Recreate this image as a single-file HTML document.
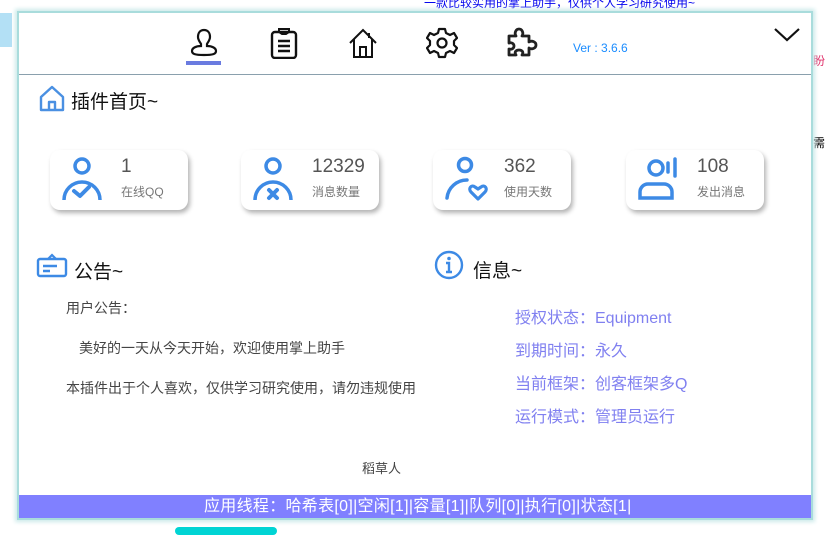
<!DOCTYPE html>
<html><head><meta charset="utf-8"><style>
*{margin:0;padding:0;box-sizing:border-box}
body{width:826px;height:531px;background:#fff;position:relative;overflow:hidden;font-family:"Liberation Sans","Noto Sans CJK SC",sans-serif}
.abs{position:absolute}
#win{position:absolute;left:17px;top:11px;width:796px;height:509px;background:#fff;border:2px solid #a9dcdc;box-shadow:0 0 4px 2px #cdeaea}
#in{position:absolute;left:-5px;top:0;width:0;height:0}
.card{position:absolute;top:137px;width:138px;height:60px;background:#fff;border-radius:10px;box-shadow:2px 3px 5px rgba(0,0,0,.3)}
.card .n{position:absolute;left:71px;top:6px;font-size:19px;color:#555}
.card .l{position:absolute;left:71px;top:33px;font-size:12px;color:#777}
.card svg{position:absolute;left:10px;top:6px}
.info{position:absolute;left:501px;font-size:16px;color:#8080f0;white-space:nowrap}
.ann{position:absolute;font-size:14px;color:#444;white-space:nowrap}
</style></head><body>
<div class="abs" style="left:0;top:13px;width:12px;height:34px;background:#b3e0f5"></div>
<div class="abs" style="left:424px;top:-6px;font-size:12px;color:#0000ee">一款比较实用的掌上助手，仅供个人学习研究使用~</div>
<div class="abs" style="left:813px;top:52px;font-size:12px;color:#e0306a">盼</div>
<div class="abs" style="left:813px;top:134px;font-size:12px;color:#000">需</div>
<div id="win">
 <div class="abs" style="left:0;top:61px;width:792px;height:1px;background:#8aa0ad"></div>
 <div id="in">
 <svg class="abs" style="left:176px;top:15px" width="28" height="30" viewBox="0 0 28 30"><path d="M14 2c-4 0-6 3-6 7 0 3 2 5 3 7v2c-5 0-9 2-9 5 0 3 3 4 12 4s12-1 12-4c0-3-4-5-9-5v-2c1-2 3-4 3-7 0-4-2-7-6-7z" fill="none" stroke="#111" stroke-width="2.2"/></svg>
 <div class="abs" style="left:172px;top:48px;width:35px;height:4px;background:#6a7be0"></div>
 <svg class="abs" style="left:255px;top:14px" width="30" height="32" viewBox="0 0 30 32"><rect x="3" y="5" width="24" height="26" rx="3" fill="none" stroke="#111" stroke-width="2.4"/><path d="M10 5V2h10v3l-3 2h-4z" fill="none" stroke="#111" stroke-width="2"/><path d="M9 14h12M9 19h12M9 24h12" stroke="#111" stroke-width="2.4"/></svg>
 <svg class="abs" style="left:333px;top:14px" width="32" height="32" viewBox="0 0 32 32"><path d="M3 16L16 3l13 13M7 12v18h18V12M13 30v-10h6v10M22 6v5" fill="none" stroke="#111" stroke-width="2"/></svg>
 <svg class="abs" style="left:412px;top:14px" width="32" height="32" viewBox="0 0 32 32"><path d="M13 2h6l1 4 4 2 4-2 3 5-3 3v4l3 3-3 5-4-2-4 2-1 4h-6l-1-4-4-2-4 2-3-5 3-3v-4L1 11l3-5 4 2 4-2z" fill="none" stroke="#111" stroke-width="2.2" stroke-linejoin="round"/><circle cx="16" cy="16" r="4.5" fill="none" stroke="#111" stroke-width="2.2"/></svg>
 <svg class="abs" style="left:492px;top:14px" width="32" height="32" viewBox="0 0 32 32"><path d="M3 9h7c-2-3 0-7 3-7s5 4 3 7h7v6c3-2 7 0 7 3s-4 5-7 3v7h-7c2-3 0-5-3-5s-5 2-3 5H3v-6c3 1 5-1 5-3s-2-4-5-3z" fill="none" stroke="#222" stroke-width="2.8" stroke-linejoin="round"/></svg>
 <div class="abs" style="left:559px;top:28px;font-size:12px;color:#1a8cff;white-space:nowrap">Ver : 3.6.6</div>
 <svg class="abs" style="left:759px;top:14px" width="28" height="16" viewBox="0 0 28 16"><path d="M2 2l12 11L26 2" fill="none" stroke="#111" stroke-width="2.2"/></svg>
 <svg class="abs" style="left:24px;top:71px" width="28" height="28" viewBox="0 0 28 28"><path d="M3 13L14 3l11 10v13H3z M11 26v-8h6v8" fill="none" stroke="#4a90e2" stroke-width="2.4" stroke-linejoin="round"/></svg>
 <div class="abs" style="left:57px;top:74px;font-size:19px;color:#111;white-space:nowrap">插件首页~</div>
 <div class="card" style="left:36px"><svg width="46" height="46" viewBox="0 0 46 46"><circle cx="22" cy="10" r="7" fill="none" stroke="#3d8ae5" stroke-width="3.5"/><path d="M4 44a18 18 0 0 1 36 0" fill="none" stroke="#3d8ae5" stroke-width="3.5"/><path d="M14 35l6 5 9-9" fill="none" stroke="#3d8ae5" stroke-width="4" stroke-linecap="round" stroke-linejoin="round"/></svg><div class="n">1</div><div class="l">在线QQ</div></div>
 <div class="card" style="left:227px"><svg width="46" height="46" viewBox="0 0 46 46"><circle cx="22" cy="10" r="7" fill="none" stroke="#3d8ae5" stroke-width="3.5"/><path d="M4 44a18 18 0 0 1 36 0" fill="none" stroke="#3d8ae5" stroke-width="3.5"/><path d="M18 34l8 8M26 34l-8 8" stroke="#3d8ae5" stroke-width="4" stroke-linecap="round"/></svg><div class="n">12329</div><div class="l">消息数量</div></div>
 <div class="card" style="left:419px"><svg width="46" height="46" viewBox="0 0 46 46"><circle cx="22" cy="9" r="6.5" fill="none" stroke="#3d8ae5" stroke-width="3.5"/><path d="M4 42a20 20 0 0 1 20-18" fill="none" stroke="#3d8ae5" stroke-width="3.5" stroke-linecap="round"/><path d="M35 43l-7-7c-3-3 0-8 4-5l3 2 3-2c4-3 7 2 4 5z" fill="none" stroke="#3d8ae5" stroke-width="3.2" stroke-linejoin="round"/></svg><div class="n">362</div><div class="l">使用天数</div></div>
 <div class="card" style="left:612px"><svg width="50" height="46" viewBox="0 0 50 46"><circle cx="20" cy="12" r="7" fill="none" stroke="#3d8ae5" stroke-width="3.5"/><path d="M4 42v-6a8 8 0 0 1 8-8h16a8 8 0 0 1 8 8v6z" fill="none" stroke="#3d8ae5" stroke-width="3.5"/><path d="M32 7v9M39 3v17" stroke="#3d8ae5" stroke-width="3.5" stroke-linecap="round"/></svg><div class="n">108</div><div class="l">发出消息</div></div>
 <svg class="abs" style="left:22px;top:239px" width="32" height="26" viewBox="0 0 32 26"><rect x="2" y="7" width="28" height="17" rx="2" fill="none" stroke="#3d8ae5" stroke-width="2.4"/><path d="M12 7l4-4 4 4" fill="none" stroke="#3d8ae5" stroke-width="2.2"/><path d="M7 14h14M7 19h7" stroke="#3d8ae5" stroke-width="2.6"/></svg>
 <div class="abs" style="left:60px;top:244px;font-size:19px;color:#111;white-space:nowrap">公告~</div>
 <div class="ann" style="left:52px;top:285px">用户公告：</div>
 <div class="ann" style="left:65px;top:325px">美好的一天从今天开始，欢迎使用掌上助手</div>
 <div class="ann" style="left:52px;top:365px">本插件出于个人喜欢，仅供学习研究使用，请勿违规使用</div>
 <svg class="abs" style="left:420px;top:237px" width="30" height="30" viewBox="0 0 30 30"><circle cx="15" cy="15" r="13" fill="none" stroke="#3d8ae5" stroke-width="2.4"/><circle cx="15" cy="8.5" r="1.8" fill="#3d8ae5"/><path d="M12 13h3v9M12 22h6" fill="none" stroke="#3d8ae5" stroke-width="2.4"/></svg>
 <div class="abs" style="left:459px;top:243px;font-size:19px;color:#111;white-space:nowrap">信息~</div>
 <div class="info" style="top:291px">授权状态：Equipment</div>
 <div class="info" style="top:324px">到期时间：永久</div>
 <div class="info" style="top:357px">当前框架：创客框架多Q</div>
 <div class="info" style="top:390px">运行模式：管理员运行</div>
 <div class="abs" style="left:348px;top:445px;font-size:13px;color:#444;white-space:nowrap">稻草人</div>
 </div>
 <div class="abs" style="left:0;top:482px;width:792px;height:23px;background:#8080ff;color:#fff;font-size:16px;line-height:23px;padding-left:185px;letter-spacing:0.3px;white-space:nowrap">应用线程：哈希表[0]|空闲[1]|容量[1]|队列[0]|执行[0]|状态[1|</div>
</div>
<div class="abs" style="left:175px;top:527px;width:102px;height:8px;border-radius:6px;background:#00d4d4"></div>
</body></html>
